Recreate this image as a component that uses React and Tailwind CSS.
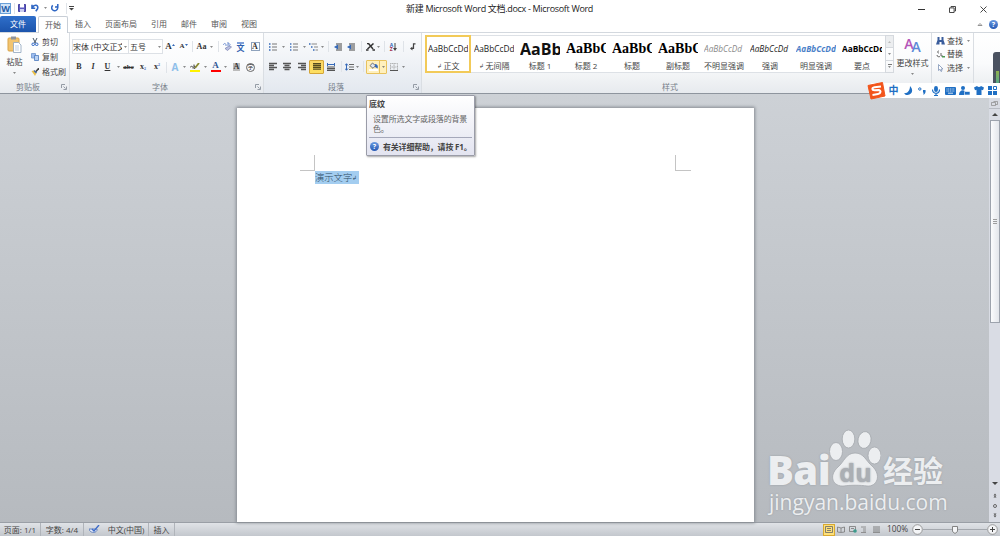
const CARET = 'M0 0h4l-2 2z';

function Caret({ className = 'w-[6px]' }) {
    return (
        <span className={`flex shrink-0 justify-center ${className}`}>
            <svg width="3" height="2" viewBox="0 0 4 2" fill="#666"><path d={CARET} /></svg>
        </span>
    );
}

function Sep({ className = 'w-[6px]' }) {
    return (
        <span className={`flex shrink-0 justify-center ${className}`}>
            <span className="h-[11px] w-px bg-[#dfe3e8]" />
        </span>
    );
}

function Cell({ className, children }) {
    return <span className={`flex shrink-0 items-center justify-center whitespace-nowrap ${className}`}>{children}</span>;
}

function Svg({ w = 10, h = 10, box, children }) {
    return (
        <svg width={w} height={h} viewBox={box || `0 0 ${w} ${h}`} fill="none" className="shrink-0">
            {children}
        </svg>
    );
}

function Lines({ d = 'M0 1.5h8M0 3.5h8M0 5.5h8M0 7.5h8' }) {
    return <Svg w={8} h={9}><path d={d} stroke="#555" strokeWidth="1.3" /></Svg>;
}

function Help() {
    return (
        <span className="flex size-[9px] shrink-0 items-center justify-center rounded-full bg-linear-to-b from-[#6a9ae0] to-[#2558b4] text-[7px] font-bold leading-none text-white">
            ?
        </span>
    );
}

function Launcher() {
    return (
        <Svg w={6} h={6}>
            <path d="M.5 4V.5H4M2.5 2.5l2 2M5.5 2.5v3h-3" stroke="#8a929c" strokeWidth=".9" />
        </Svg>
    );
}

function Group({ label, width, launcher = true, className = '', children }) {
    return (
        <section className={`flex shrink-0 flex-col border-r border-[#dadee3] ${width} ${className}`}>
            <div className="h-[47px]">{children}</div>
            <div className="flex h-[13px] items-center text-[#777f8a]">
                <span className="flex-1 pr-[5px] text-center">{label}</span>
                <span className="w-[8px]">{launcher && <Launcher />}</span>
            </div>
        </section>
    );
}

function TitleBar() {
    return (
        <header className="grid h-4 grid-cols-[1fr_188px_1fr] items-center">
            <div className="flex h-full items-center">
                <span className="flex size-[11px] shrink-0 items-center justify-center border border-[#6aa0d8] bg-[#cfe3f7] text-[9px] font-bold leading-none text-[#1f5ca8]">W</span>
                <Sep className="w-[6px]" />
                <Cell className="w-[10px]">
                    <Svg w={8} h={8}>
                        <path d="M.5.5h7v7h-7z" fill="#5d5ac0" stroke="#4643a0" />
                        <path d="M2 0h4v3.5H2z" fill="#fff" />
                        <path d="M2 5h4v3H2z" fill="#c9cdf0" />
                    </Svg>
                </Cell>
                <Cell className="w-[16px]">
                    <Svg w={8} h={8}><path d="M1 .8v3.4h3.2M1.4 3.8C3-.1 8 .8 6.5 4.8L4.8 7.2" stroke="#2f67c4" strokeWidth="1.6" /></Svg>
                </Cell>
                <Caret className="w-[4px]" />
                <Cell className="w-[16px]">
                    <Svg w={8} h={8}><path d="M1.8 1.4A3 3 0 1 0 6 1.8M6.8 0v3H4" stroke="#2f67c4" strokeWidth="1.5" /></Svg>
                </Cell>
                <Sep className="w-[6px]" />
                <Svg w={5} h={5}><path d="M0 .5h5" stroke="#444" /><path d="M0 2h5L2.5 4.5z" fill="#444" /></Svg>
            </div>
            <h1 className="text-[9px] leading-none tracking-[-0.32px] whitespace-nowrap text-[#222]">新建 Microsoft Word 文档.docx - Microsoft Word</h1>
            <div className="flex items-center justify-end gap-[24px] pt-[3px] pr-[13px]">
                <Svg w={7} h={7}><path d="M0 3.5h7" stroke="#333" /></Svg>
                <Svg w={7} h={7}><path d="M.5 1.9h4.6v4.6H.5zM2 1.5V.5h4.5V5H5.5" stroke="#333" strokeWidth=".9" /></Svg>
                <Svg w={7} h={7}><path d="M.5.5l6 6M6.5.5l-6 6" stroke="#333" strokeWidth=".9" /></Svg>
            </div>
        </header>
    );
}

function Tabs() {
    return (
        <nav className="flex h-4 items-stretch text-[8px] text-[#555]">
            <span className="flex w-[36px] items-center justify-center rounded-t-[2px] bg-linear-to-b from-[#2f6fca] to-[#1c54ac] text-white">文件</span>
            <span className="z-10 ml-[2px] -mb-px flex w-[30px] items-center justify-center rounded-t-[2px] border border-b-0 border-[#c8ced6] bg-white">开始</span>
            <Cell className="ml-[7px] w-[16px]">插入</Cell>
            <Cell className="ml-[14px] w-[32px]">页面布局</Cell>
            <Cell className="ml-[14px] w-[16px]">引用</Cell>
            <Cell className="ml-[14px] w-[16px]">邮件</Cell>
            <Cell className="ml-[14px] w-[16px]">审阅</Cell>
            <Cell className="ml-[14px] w-[16px]">视图</Cell>
            <div className="ml-auto flex items-center gap-[6px] pr-[2px]">
                <Svg w={6} h={5}><path d="M1 3.5L3 1.5l2 2z" stroke="#888" strokeWidth=".9" /></Svg>
                <Help />
            </div>
        </nav>
    );
}

function Clipboard() {
    return (
        <div className="flex h-full pt-px">
            <div className="flex w-[29px] flex-col items-center pt-[2px]">
                <Svg w={15} h={17}>
                    <rect x="1" y="2" width="11" height="13" rx="1" fill="#f2c46f" stroke="#d9a44b" />
                    <path d="M4 .5h5v3H4z" fill="#8f949c" />
                    <path d="M6.5 6.5h5l2.5 2.5v7.5H6.5z" fill="#fff" stroke="#8ea3bd" strokeWidth=".8" />
                    <path d="M8 10h4M8 12h4M8 14h4" stroke="#a9bbd2" strokeWidth=".7" />
                </Svg>
                <span className="mt-[3px] mb-[4px] leading-[12px]">粘贴</span>
                <Caret />
            </div>
            <div className="flex flex-col">
                <span className="flex h-[15px] items-center gap-[3px] pl-[2px]">
                    <Svg w={8} h={8}><path d="M2 0l2.5 5M6 0L3.5 5" stroke="#456" /><circle cx="2.2" cy="6.3" r="1.3" stroke="#2f67c4" /><circle cx="5.7" cy="6.3" r="1.3" stroke="#2f67c4" /></Svg>
                    剪切
                </span>
                <span className="flex h-[15px] items-center gap-[3px] pl-[2px]">
                    <Svg w={8} h={8}><path d="M.5.5H4.500v4.500H.5z" fill="#9dbdf0" stroke="#6d94cc" strokeWidth=".8" /><path d="M3.5 2.5h4v5h-4z" fill="#b9d1f2" stroke="#4a78bd" strokeWidth=".8" /></Svg>
                    复制
                </span>
                <span className="flex h-[15px] items-center gap-[3px] pl-[2px]">
                    <Svg w={8} h={8}><path d="M8 0L4.5 4" stroke="#444" strokeWidth="1.5" /><path d="M.5 3L3 2.5 5.5 5 4 8z" fill="#eabf48" /><path d="M3 2.5L5.5 5" stroke="#3b66b0" strokeWidth="1.2" /></Svg>
                    格式刷
                </span>
            </div>
        </div>
    );
}

function FontTools() {
    return (
        <div className="flex h-full flex-col pt-[6px] pl-[2px] font-['Liberation_Serif','Noto_Sans_CJK_SC',serif] font-bold text-[#333]">
            <div className="flex h-[15px] items-center">
                <div className="flex h-[15px] w-[57px] items-center justify-between border border-[#dde1e6] bg-white font-['Open_Sans','Noto_Sans_CJK_SC',sans-serif] text-[8px] font-normal">
                    <span className="w-[49px] overflow-hidden whitespace-nowrap">宋体 (中文正文</span>
                    <Caret />
                </div>
                <div className="flex h-[15px] w-[34px] items-center justify-between border border-l-0 border-[#dde1e6] bg-white pl-[1px] font-['Open_Sans','Noto_Sans_CJK_SC',sans-serif] text-[8px] font-normal">
                    五号
                    <Caret />
                </div>
                <Cell className="w-[14px] text-[9px]">A<Svg w={3} h={6}><path d="M0 2h3L1.5 0z" fill="#3569b8" /></Svg></Cell>
                <Cell className="w-[13px] text-[7px]">A<Svg w={3} h={6}><path d="M0 0h3L1.5 2z" fill="#3569b8" /></Svg></Cell>
                <Sep className="w-[5px]" />
                <Cell className="w-[13px] text-[8px]">Aa</Cell>
                <Caret className="w-[7px]" />
                <Sep />
                <Cell className="w-[12px]">
                    <Svg w={9} h={9}><path d="M.5 3c0-2 2.500-2 2.500 0v1M5 0v4M5 2c2-1 3 1 1 2" stroke="#6f8fd0" /><path d="M2 6.500l4-2.500 2.500 1-4 3.500z" fill="#b9c0e2" stroke="#7880b0" strokeWidth=".7" /></Svg>
                </Cell>
                <Cell className="w-[15px] flex-col font-['Noto_Sans_CJK_SC',sans-serif] text-[8px] leading-none text-[#2f5fae]">
                    <span className="h-[2px] w-[7px] bg-[#7fa0d8]" />文
                </Cell>
                <Cell className="w-[14px]"><span className="flex size-[9px] items-center justify-center border border-[#8fa3bd] text-[8px] leading-none">A</span></Cell>
            </div>
            <div className="mt-[6px] flex h-[14px] items-center text-[8px]">
                <Cell className="w-[14px]">B</Cell>
                <Cell className="w-[14px] italic">I</Cell>
                <Cell className="w-[15px] underline">U</Cell>
                <Caret />
                <Cell className="w-[15px] text-[7px] line-through">abc</Cell>
                <Cell className="w-[14px]">x<span className="pt-1 text-[4px] text-[#3569b8]">2</span></Cell>
                <Cell className="w-[14px]">x<span className="pb-1 text-[4px] text-[#3569b8]">2</span></Cell>
                <Sep className="w-[5px]" />
                <Cell className="w-[12px] font-['Open_Sans',sans-serif] text-[10px] text-[#8fc0ea]">A</Cell>
                <Caret />
                <Cell className="w-[15px] flex-col">
                    <Svg w={10} h={7}><path d="M0 4.5c1-2 3-1 3 0v1M4 1.5v4c2 0 2-3 0-2" stroke="#444" /><path d="M9 0L5 5" stroke="#8a8a30" strokeWidth="1.8" /></Svg>
                    <span className="h-[2px] w-[10px] bg-[#fff200]" />
                </Cell>
                <Caret />
                <Cell className="w-[15px] flex-col text-[9px] leading-[7px] text-[#2e5594]">
                    A<span className="mt-px h-[2px] w-[10px] bg-[#f00]" />
                </Cell>
                <Caret className="w-[5px]" />
                <Cell className="w-[17px]"><span className="flex h-[8px] w-[7px] items-center justify-center bg-[#bbb] leading-none">A</span></Cell>
                <Cell className="w-[11px]"><span className="flex size-[9px] shrink-0 items-center justify-center rounded-full border border-[#666] text-[6px] font-normal leading-none">字</span></Cell>
            </div>
        </div>
    );
}

function ParagraphTools() {
    return (
        <div className="flex h-full flex-col pt-[6px] pl-[2px]">
            <div className="flex h-[15px] items-center">
                <Cell className="w-[14px]"><Svg w={8} h={8}><path d="M0 1h1.5M0 4h1.5M0 7h1.5" stroke="#3569b8" strokeWidth="1.5" /><path d="M3 1h5M3 4h5M3 7h5" stroke="#777" /></Svg></Cell>
                <Caret />
                <Cell className="w-[15px]"><Svg w={8} h={8}><path d="M.8 0v8" stroke="#3569b8" strokeDasharray="2 1" /><path d="M3 1h5M3 4h5M3 7h5" stroke="#777" /></Svg></Cell>
                <Caret />
                <Cell className="w-[13px]"><Svg w={9} h={8}><path d="M0 1h1.5M2 4h1.5M4 7h1.5" stroke="#3569b8" strokeWidth="1.3" /><path d="M2.5 1H8M5 4h4M6.5 7H9" stroke="#888" /></Svg></Cell>
                <Caret className="w-[5px]" />
                <Sep />
                <Cell className="w-[13px]"><Svg w={8} h={8}><path d="M2 1h6M4 3h4M4 5h4M2 7h6" stroke="#444" strokeWidth="1.200" /><path d="M4 1.500v5L0 4z" fill="#3569b8" /></Svg></Cell>
                <Cell className="w-[14px]"><Svg w={8} h={8}><path d="M2 1h6M4 3h4M4 5h4M2 7h6" stroke="#444" strokeWidth="1.200" /><path d="M4 1.500v5L0 4z" fill="#3569b8" /></Svg></Cell>
                <Sep />
                <Cell className="w-[12px]"><Svg w={9} h={8}><path d="M1 .5h1.5L7 6M7.5.5L1.5 6" stroke="#333" strokeWidth="1.5" /><path d="M0 7h2.500M6.500 7H9" stroke="#333" strokeWidth="1.300" /></Svg></Cell>
                <Caret className="w-[5px]" />
                <Sep />
                <Cell className="w-[13px]">
                    <span className="flex flex-col text-[5px] font-bold leading-[4px]"><span className="text-[#3569b8]">A</span><span className="text-[#a03050]">Z</span></span>
                    <Svg w={4} h={8}><path d="M2 0v6" stroke="#444" /><path d="M0 5h4L2 8z" fill="#444" /></Svg>
                </Cell>
                <Sep />
                <Cell className="w-[14px]"><Svg w={6} h={8}><path d="M5.5.8H3.500V5.500H1" stroke="#444" strokeWidth="1.200" /><path d="M0 5.500L2.500 3.500v4z" fill="#444" /></Svg></Cell>
            </div>
            <div className="mt-[5px] flex h-[15px] items-center">
                <Cell className="w-[14px]"><Lines d="M0 1.5h8M0 3.5h5M0 5.5h8M0 7.5h5" /></Cell>
                <Cell className="w-[14px]"><Lines d="M0 1.5h8M1.5 3.5h5M0 5.5h8M1.5 7.5h5" /></Cell>
                <Cell className="w-[15px]"><Lines d="M0 1.5h8M3 3.5h5M0 5.5h8M3 7.5h5" /></Cell>
                <Cell className="h-[14px] w-[15px] rounded-[1px] border border-[#d4a538] bg-linear-to-b from-[#fbd667] to-[#fddf60]">
                    <Svg w={8} h={7}><path d="M0 .7h8M0 2.500h8M0 4.300h8M0 6.100h8" stroke="#554a20" strokeWidth="1.300" /></Svg>
                </Cell>
                <Cell className="w-[14px]"><Svg w={8} h={8}><path d="M.5 0v3M7.5 0v3M1 1.5h6" stroke="#3569b8" /><path d="M0 4h8M0 5.7h8M0 7.4h8" stroke="#555" strokeWidth="1.2" /></Svg></Cell>
                <Sep />
                <Cell className="w-[11px]"><Svg w={9} h={8}><path d="M1.5 1v6M0 2.5L1.5.7 3 2.5M0 5.5l1.5 1.8L3 5.5" stroke="#3569b8" /><path d="M4 1.5h5M4 4h5M4 6.5h5" stroke="#666" /></Svg></Cell>
                <Caret className="w-[5px]" />
                <Sep />
                <div className="flex h-[14px] w-[21px] items-center rounded-[1px] border border-[#e8c25e] bg-[#fff0bd]">
                    <Cell className="h-full w-[13px] flex-col border-r border-[#e8c25e]">
                        <Svg w={9} h={7}><path d="M3.5 1l3 2.7L4 6.3 1 3.7z" fill="#dfe6f0" stroke="#666" strokeWidth=".9" /><path d="M6 2c3 .3 3.200 2.500 2.500 4.500L6 5z" fill="#3569b8" /></Svg>
                        <span className="h-[2px] w-[9px] bg-white" />
                    </Cell>
                    <Caret />
                </div>
                <Cell className="w-[14px]"><Svg w={8} h={8}><path d="M.5.5h7v7h-7zM4 .5v7M.5 4h7" stroke="#999" strokeWidth=".8" strokeDasharray="1 .6" /><path d="M0 7.5h8" stroke="#555" /></Svg></Cell>
                <Caret className="w-[5px]" />
            </div>
        </div>
    );
}

const styles = [
    { label: '↲正文', sample: 'AaBbCcDd', preview: 'text-[8.3px] text-[#222]', active: true },
    { label: '↲无间隔', sample: 'AaBbCcDd', preview: 'text-[8.3px] text-[#222]' },
    { label: '标题 1', sample: 'AaBb', preview: 'text-[16px] font-bold text-[#111]' },
    { label: '标题 2', sample: 'AaBbC', preview: "text-[14px] font-bold text-black font-['Liberation_Serif',serif]" },
    { label: '标题', sample: 'AaBbC', preview: "text-[14px] font-bold text-black font-['Liberation_Serif',serif]" },
    { label: '副标题', sample: 'AaBbC', preview: "text-[14px] font-bold text-black font-['Liberation_Serif',serif]" },
    { label: '不明显强调', sample: 'AaBbCcDd', preview: 'text-[8.3px] italic text-[#8a8a8a]' },
    { label: '强调', sample: 'AaBbCcDd', preview: 'text-[8.3px] italic text-[#222]' },
    { label: '明显强调', sample: 'AaBbCcDd', preview: 'text-[8.3px] font-bold italic text-[#4a7fc8]' },
    { label: '要点', sample: 'AaBbCcDd', preview: 'text-[8.3px] font-bold text-black' },
];

function StyleGallery() {
    return (
        <div className="flex h-full">
            <div className="mt-[2px] ml-[3px] flex h-[38px] border-y border-[#dde1e6] bg-white">
                {styles.map(s => (
                    <div
                        key={s.label}
                        className={`-my-px flex w-[46px] flex-col items-center border-2 ${s.active ? 'border-[#f2ca58]' : 'border-transparent'}`}
                    >
                        <span className={`flex h-[24px] w-[40px] items-center overflow-hidden whitespace-nowrap ${s.preview}`}>{s.sample}</span>
                        <span className="flex h-[9px] items-center whitespace-nowrap">
                            {s.label.startsWith('↲') && <span className="mr-[2px] text-[6px]">↲</span>}
                            {s.label.replace('↲', '')}
                        </span>
                    </div>
                ))}
            </div>
            <div className="mt-[2px] flex h-[38px] w-[9px] flex-col divide-y divide-[#d5d9de] border border-[#d5d9de]">
                <Cell className="flex-1 bg-[#eceef0]"><Svg w={3} h={2}><path d="M0 2h3L1.5 0z" fill="#bbb" /></Svg></Cell>
                <Cell className="flex-1"><Caret /></Cell>
                <Cell className="flex-1 flex-col gap-px"><span className="h-px w-[4px] bg-[#777]" /><Caret /></Cell>
            </div>
            <div className="flex w-[37px] flex-col items-center pt-[4px]">
                <div className="flex h-[15px] items-start leading-none">
                    <span className="text-[14px] font-semibold text-[#b455b8]">A</span>
                    <span className="-ml-[2px] pt-[3px] text-[14px] font-semibold text-[#5b8ad8]">A</span>
                </div>
                <span className="mt-[5px] mb-[4px] leading-[12px] whitespace-nowrap">更改样式</span>
                <Caret />
            </div>
        </div>
    );
}

function Editing() {
    return (
        <div className="flex h-full flex-col pt-px pl-[4px]">
            <span className="flex h-[13.5px] items-center gap-[2px]">
                <Svg w={9} h={8}><path d="M1.5 0h2v3h2V0h2v3L9 7.5H5.5V5h-2v2.5H0L1.5 3z" fill="#3a5d9c" /></Svg>
                查找<Caret />
            </span>
            <span className="flex h-[13.5px] items-center gap-[2px]">
                <Svg w={9} h={8}><path d="M3 1C1 1 1 3 3 3M1 5c0 2 2 2 3 1.5" stroke="#666" /><path d="M5 3v3h2" stroke="#666" /><path d="M6 6h3v1.5H6z" fill="#4c9a50" /></Svg>
                替换
            </span>
            <span className="flex h-[13.5px] items-center gap-[2px]">
                <Svg w={9} h={8}><path d="M2.5.5v6L4 5.3 5 7.5l1-.5-1-2h2z" fill="#fff" stroke="#7d93b5" strokeWidth=".8" /></Svg>
                选择<Caret />
            </span>
        </div>
    );
}

function Ribbon() {
    return (
        <div className="flex h-[62px] border-t border-b border-t-[#d3d8de] border-b-[#8e959e] bg-linear-to-b from-white via-[#fafbfc] to-[#e7eaee] text-[8px] leading-none text-[#444]">
            <Group label="剪贴板" width="w-[70px]"><Clipboard /></Group>
            <Group label="字体" width="w-[194px]"><FontTools /></Group>
            <Group label="段落" width="w-[158px]" className="bg-linear-to-b from-[#fbfcfd] to-[#e3e8ef]"><ParagraphTools /></Group>
            <Group label="样式" width="w-[510px]" launcher={false}><StyleGallery /></Group>
            <Group label="" width="w-[42px]" launcher={false}><Editing /></Group>
            <div className="mt-[19px] ml-auto flex h-[32px] w-[7px] items-end rounded-tl-[3px] bg-[#4a5260] pl-[3px]">
                <span className="h-[13px] w-[3px] bg-linear-to-b from-[#8fb04a] to-[#4fa88a]" />
            </div>
        </div>
    );
}

function Tooltip() {
    return (
        <aside className="absolute top-[95px] left-[366px] z-20 h-[61px] w-[109px] rounded-[1px] border border-[#9a9ca8] bg-linear-to-b from-white to-[#e3e4f0] px-[2px] text-[8px] text-[#666] shadow-[1px_1px_2px_rgba(0,0,0,.35)]">
            <p className="h-[15px] font-bold leading-[15px] text-[#444]">底纹</p>
            <p className="h-[26px] w-[103px] pt-[3px] pl-[4px] leading-[10px] tracking-[-0.15px]">设置所选文字或段落的背景色。</p>
            <div className="flex h-[18px] items-center gap-[4px] border-t border-[#a5a8ba] pl-px font-bold whitespace-nowrap text-[#444]">
                <Help />
                <span className="tracking-[-0.2px]">有关详细帮助，请按 F1。</span>
            </div>
        </aside>
    );
}

function InputBar() {
    return (
        <div className="absolute top-[83px] left-[871px] z-20 flex h-[15px] w-[129px] items-center bg-white text-[#1f6fc4]">
            <Cell className="-ml-[4px] w-[18px]">
                <Svg w={19} h={18}>
                    <path d="M1 3.5L15.5.5 18 14 4 17z" fill="#f2541b" stroke="#f2541b" strokeLinejoin="round" />
                    <path d="M14 4.5L7.5 5.2c-3 .6-2.5 3 0 3l4-.1c3 .1 2.5 3.5-.5 4L5.5 13" stroke="#fff" strokeWidth="2" />
                </Svg>
            </Cell>
            <Cell className="w-[17px] text-[10px] font-bold">中</Cell>
            <Cell className="w-[13px]"><Svg w={9} h={9}><path d="M6 0c4 4 2 9-2.500 9C2 9 1 8.5 0 7.200c4 .3 6-3 6-7.200z" fill="#1f6fc4" /></Svg></Cell>
            <Cell className="w-[14px]"><Svg w={8} h={8}><circle cx="1.8" cy="2" r="1.2" stroke="#1f6fc4" /><path d="M5 3h2.5c.5 2-.5 4-2 5V5.5H5z" fill="#1f6fc4" /></Svg></Cell>
            <Cell className="w-[14px]"><Svg w={8} h={10}><rect x="2.1" width="3.8" height="6" rx="1.9" fill="#1f6fc4" /><path d="M.5 3.5c0 5 7 5 7 0M4 7v3M2 9.5h4" stroke="#1f6fc4" strokeWidth="1.200" /></Svg></Cell>
            <Cell className="w-[14px]"><Svg w={11} h={8}><rect width="11" height="8" rx="1" fill="#1f6fc4" /><path d="M1.5 2h8M1.5 4h8" stroke="#fff" strokeWidth=".8" strokeDasharray="1 .7" /><path d="M3 6.2h5" stroke="#fff" strokeWidth=".8" /></Svg></Cell>
            <Cell className="w-[15px]"><Svg w={11} h={9}><circle cx="4" cy="2" r="2" fill="#1f6fc4" /><path d="M0 9c0-6 7-6 7-1v1z" fill="#1f6fc4" /><path d="M5.5 5.5H11V9H5.5z" fill="#1f6fc4" stroke="#fff" strokeWidth=".6" /></Svg></Cell>
            <Cell className="w-[13px]"><Svg w={10} h={9}><path d="M3 0c1 1.2 3 1.2 4 0l3 1.5-1 2.7-1.500-.5V9h-5V3.700L1 4.200 0 1.500z" fill="#1f6fc4" /></Svg></Cell>
            <Cell className="w-[15px]"><Svg w={9} h={9}><path d="M0 0h4v4H0zM0 5h4v4H0zM5 5h4v4H5z" fill="#1f6fc4" /><path d="M5.5.5h3v3h-3z" stroke="#1f6fc4" /></Svg></Cell>
        </div>
    );
}

function ScrollBar() {
    return (
        <div className="flex w-[11px] flex-col items-center bg-[#d9dce4] pt-[5px]">
            <Cell className="h-[10px] w-full border-b border-[#b8bcc4]"><Svg w={7} h={6}><path d="M.5 1.5h4v3h-4zM2.5.5h4v3h-2" stroke="#888" strokeWidth=".7" /></Svg></Cell>
            <Cell className="h-[11px]"><Svg w={6} h={3}><path d="M0 3h6L3 0z" fill="#444" /></Svg></Cell>
            <Cell className="h-[203px] w-[10px] border border-[#9da3ad] bg-linear-to-r from-[#fbfcfd] to-[#e3e6eb]">
                <Svg w={4} h={5}><path d="M0 .5h4M0 2.5h4M0 4.5h4" stroke="#888" strokeWidth=".8" /></Svg>
            </Cell>
            <div className="mt-auto flex h-[44px] flex-col items-center justify-between pb-[4px]">
                <Cell className="h-[10px]"><Svg w={6} h={3}><path d="M0 0h6L3 3z" fill="#444" /></Svg></Cell>
                <Svg w={4} h={5}><path d="M.5 2.5h3L2 .5zM.5 4.500h3L2 2.500z" fill="#555" /></Svg>
                <Svg w={4} h={4}><circle cx="2" cy="2" r="1.5" stroke="#666" /></Svg>
                <Svg w={4} h={5}><path d="M.5.500h3L2 2.500zM.5 2.500h3L2 4.500z" fill="#555" /></Svg>
            </div>
        </div>
    );
}

function Watermark() {
    return (
        <div className="absolute top-[426px] left-[767px] z-10 w-[182px] text-[#eceef0] [text-shadow:0_0_2px_#92979d]">
            <div className="flex h-[62px] items-end leading-none whitespace-nowrap">
                <span className="w-[62px] text-[40px] font-extrabold leading-[36px] tracking-[-0.6px]">Bai</span>
                <svg width="52" height="60" viewBox="0 0 52 60" className="shrink-0">
                    <g fill="#eceef0" stroke="#a4a8ad" strokeWidth=".8">
                        <ellipse cx="7" cy="23.500" rx="6.500" ry="9" />
                        <ellipse cx="19.500" cy="11" rx="6.300" ry="9" />
                        <ellipse cx="35.500" cy="12" rx="6.500" ry="8.500" transform="rotate(12 35.500 12)" />
                        <ellipse cx="45.500" cy="27.500" rx="6.500" ry="8.500" />
                        <path d="M26 25c9 0 11 8 17 13 10 9 5 21-5 20-6-1-18-1-23 0-11 1-16-10-6-19C15 34 17 25 26 25z" />
                    </g>
                    <text x="26.500" y="54" textAnchor="middle" fill="#abafb4" fontSize="25" fontWeight="700" fontFamily="Open Sans, sans-serif">du</text>
                </svg>
                <span className="pl-[2px] text-[30px] font-bold leading-[34px]">经验</span>
            </div>
            <p className="pl-[2px] text-[21px] leading-[28px] whitespace-nowrap">jingyan.baidu.com</p>
        </div>
    );
}

function Document() {
    return (
        <main className="flex h-[428px] bg-linear-to-b from-[#cdd1d6] to-[#b6babf]">
            <div className="flex flex-1 pt-[14px] pl-[237px]">
                <article className="w-[517px] bg-white pt-[47px] shadow-[0_0_3px_1px_#858a91]">
                    <div className="flex justify-between px-[63px]">
                        <span className="h-[16px] w-[15px] border-r border-b border-[#c4c4c4]" />
                        <span className="h-[16px] w-[16px] border-b border-l border-[#c4c4c4]" />
                    </div>
                    <p className="ml-[78px] flex h-[13px] w-[44px] items-center bg-[#a3cdf0] text-[9.3px] font-light whitespace-nowrap text-[#2c4a63]">
                        演示文字<span className="pt-[2px] text-[6px]">↲</span>
                    </p>
                </article>
            </div>
            <ScrollBar />
        </main>
    );
}

function StatusBar() {
    return (
        <footer className="flex h-[14px] items-center border-t border-[#9a9fa6] bg-linear-to-b from-[#e0e3e7] to-[#c3c7cd] text-[8px] leading-none whitespace-nowrap text-[#444]">
            <Cell className="h-full w-[41px] border-r border-[#b0b4ba]">页面: 1/1</Cell>
            <Cell className="h-full w-[43px] border-r border-[#b0b4ba]">字数: 4/4</Cell>
            <Cell className="w-[20px]">
                <Svg w={11} h={9}><path d="M0 4h8c1 4-7 5-8 0z" fill="#e8eefa" stroke="#4a70b8" strokeWidth=".8" /><path d="M3 4l2 2 5-6" stroke="#3f6cc8" strokeWidth="1.4" /></Svg>
            </Cell>
            <Cell className="h-full w-[45px] border-r border-[#b0b4ba]">中文(中国)</Cell>
            <Cell className="h-full w-[26px] border-r border-[#b0b4ba]">插入</Cell>
            <div className="ml-auto flex h-full items-center">
                <Cell className="h-[12px] w-[12px] border border-[#d9a930] bg-[#fde07a]"><Svg w={8} h={7}><path d="M.5.5h7v6h-7zM2 2.5h4M2 4.5h4" stroke="#666" strokeWidth=".8" /></Svg></Cell>
                <Cell className="w-[12px]"><Svg w={8} h={7}><path d="M.5 1l3.5 1 3.5-1v5L4 6.5.5 6zM4 2v4" stroke="#777" strokeWidth=".8" /></Svg></Cell>
                <Cell className="w-[11px]"><Svg w={8} h={7}><path d="M.5.5h6v5h-6zM2 2.5h3" stroke="#777" strokeWidth=".8" /><circle cx="6" cy="5" r="1.8" fill="#3d9a8c" /></Svg></Cell>
                <Cell className="w-[12px]"><Svg w={7} h={7}><path d="M0 1h5M2 3h3M2 5h3M0 6.5h5" stroke="#888" strokeWidth=".9" /></Svg></Cell>
                <Cell className="w-[12px]"><Svg w={7} h={7}><path d="M0 1h7M0 3h7M0 5h7M0 6.7h7" stroke="#777" strokeWidth=".9" /></Svg></Cell>
                <span className="ml-[5px] w-[25px] text-[8.3px]">100%</span>
                <Svg w={11} h={11}><circle cx="5.5" cy="5.5" r="4.8" fill="#f4f5f7" stroke="#888" strokeWidth=".8" /><path d="M3 5.5h5" stroke="#444" /></Svg>
                <span className="flex w-[64px] items-center">
                    <span className="h-px flex-1 bg-[#a4a8ae]" />
                    <Svg w={6} h={8}><path d="M.5.5h5v5L3 7.5.5 5.5z" fill="#f4f5f7" stroke="#777" strokeWidth=".9" /></Svg>
                    <span className="h-px flex-1 bg-[#a4a8ae]" />
                </span>
                <Svg w={11} h={11}><circle cx="5.5" cy="5.5" r="4.8" fill="#f4f5f7" stroke="#888" strokeWidth=".8" /><path d="M3 5.5h5M5.5 3v5" stroke="#444" /></Svg>
                <span className="w-[2px]" />
            </div>
        </footer>
    );
}

export default function App() {
    return (
        <div className="relative h-[536px] w-[1000px] overflow-hidden bg-white font-['Open_Sans','Noto_Sans_CJK_SC',sans-serif]">
            <TitleBar />
            <Tabs />
            <Ribbon />
            <Document />
            <StatusBar />
            <Tooltip />
            <InputBar />
            <Watermark />
        </div>
    );
}
